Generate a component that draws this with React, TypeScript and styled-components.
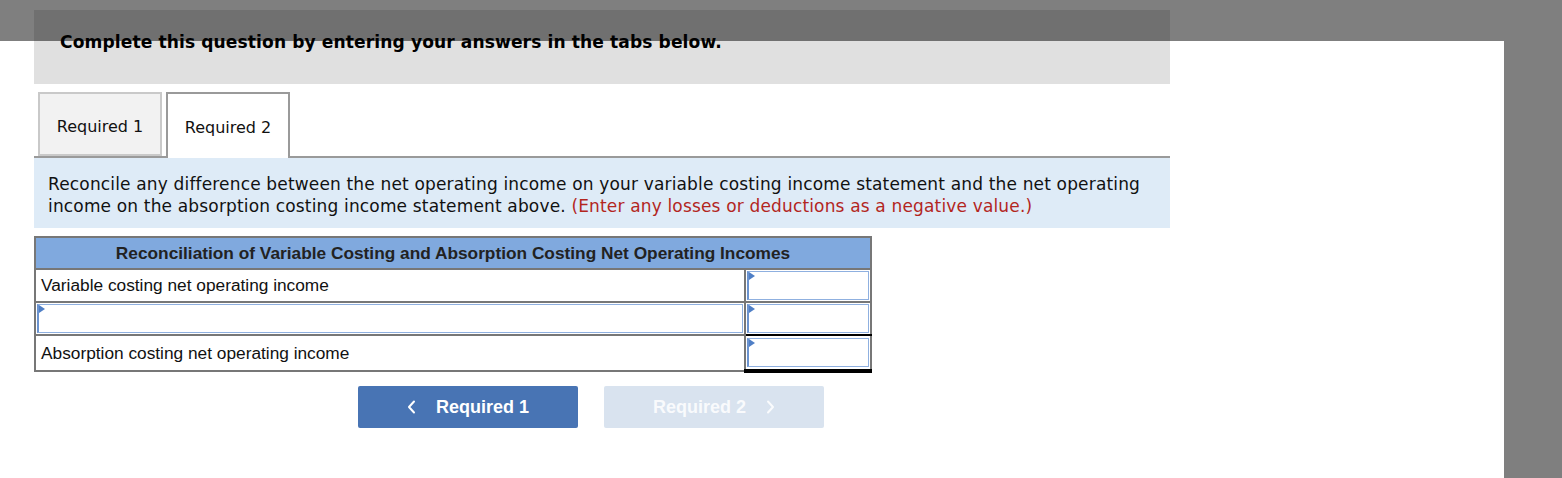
import styled, { createGlobalStyle } from "styled-components";

const GlobalStyle = createGlobalStyle`
  html, body {
    margin: 0;
    padding: 0;
    background: #fff;
  }
  body {
    width: 1562px;
    height: 478px;
    overflow: hidden;
    position: relative;
    font-family: "DejaVu Sans", Verdana, sans-serif;
    color: #111;
  }
`;

// Page shell
const Page = styled.div`
  padding: 10px 0 0 34px;
  width: 1136px;
`;

const Banner = styled.div`
  height: 74px;
  background: #e0e0e0;
  padding: 22px 0 0 26px;
  box-sizing: border-box;
  font-size: 17.1px;
  letter-spacing: 0.1px;
  font-weight: 700;
  color: #000;
`;

// Tabs
const TabStrip = styled.div`
  margin-top: 8px;
  display: flex;
  gap: 4px;
  padding-left: 4px;
  border-bottom: 2px solid #9a9a9a;
  height: 64px;
`;

const Tab = styled.div<{ $active?: boolean }>`
  width: 124px;
  height: ${({ $active }) => ($active ? "66px" : "64px")};
  box-sizing: border-box;
  display: flex;
  align-items: center;
  justify-content: center;
  font-size: 16px;
  color: #111;
  background: ${({ $active }) => ($active ? "#fff" : "#f2f2f2")};
  border: 2px solid ${({ $active }) => ($active ? "#9a9a9a" : "#c9c9c9")};
  border-bottom: ${({ $active }) => ($active ? "none" : "2px solid #c9c9c9")};
  position: relative;
  z-index: 1;
  padding-top: ${({ $active }) => ($active ? "2px" : "5px")};
`;

const Instructions = styled.div`
  background: #deebf7;
  padding: 15px 14px 11px 14px;
  font-size: 17px;
  line-height: 22px;
  letter-spacing: 0.16px;
  white-space: nowrap;
  color: #111;
`;

const Hint = styled.span`
  color: #b3261e;
`;

// Reconciliation table
const Sheet = styled.table`
  margin-top: 8px;
  width: 838px;
  border-collapse: collapse;
  font-family: "Liberation Sans", Arial, sans-serif;
  font-size: 17.3px;
  color: #111;
  border: 2px solid #777;
`;

const HeadCell = styled.th`
  height: 30px;
  background: #80a9de;
  font-weight: 700;
  text-align: center;
  color: #222;
  border: 2px solid #777;
  padding: 0;
`;

const LabelCell = styled.td<{ $tall?: boolean }>`
  height: ${({ $tall }) => ($tall ? "36px" : "31px")};
  padding: 0 0 0 5px;
  border: 2px solid #777;
  background: #fff;
  box-sizing: border-box;
`;

const InputCell = styled.td<{ $rule?: "single" | "double"; $wide?: boolean }>`
  width: ${({ $wide }) => ($wide ? "auto" : "126px")};
  padding: 1px;
  border: 2px solid #777;
  background: #fff;
  border-bottom: ${({ $rule }) =>
    $rule === "double" ? "4px solid #000" : $rule === "single" ? "2px solid #000" : "2px solid #777"};
  box-sizing: border-box;
`;

const EntryBox = styled.div`
  position: relative;
  height: 29px;
  box-sizing: border-box;
  border: 1px solid #8fb0e0;
  border-left: 2px solid #6b93cf;
  background: #fff;

  &::before {
    content: "";
    position: absolute;
    left: 0;
    top: 0;
    border-top: 4px solid transparent;
    border-bottom: 4px solid transparent;
    border-left: 6px solid #4f7fc6;
  }
`;

// Navigation buttons
const NavRow = styled.div`
  display: flex;
  gap: 26px;
  padding: 13px 0 0 324px;
`;

const NavButton = styled.button<{ $disabled?: boolean }>`
  width: 220px;
  height: 42px;
  border: none;
  border-radius: 2px;
  display: flex;
  align-items: center;
  justify-content: center;
  gap: 20px;
  font-family: "Liberation Sans", Arial, sans-serif;
  font-size: 18px;
  font-weight: 700;
  color: ${({ $disabled }) => ($disabled ? "rgba(255,255,255,0.85)" : "#fff")};
  background: ${({ $disabled }) => ($disabled ? "#d9e3ef" : "#4874b4")};
  cursor: ${({ $disabled }) => ($disabled ? "default" : "pointer")};
`;

// Modal dimmer lying over the page
const Dimmer = styled.div<{ $side: "top" | "right" }>`
  position: absolute;
  background: rgba(0, 0, 0, 0.5);
  ${({ $side }) =>
    $side === "top"
      ? "left: 0; top: 0; width: 1562px; height: 41px;"
      : "left: 1504px; top: 41px; width: 58px; height: 437px;"}
`;

const Chevron = ({ dir }: { dir: "left" | "right" }) => (
  <svg width="9" height="14" viewBox="0 0 9 14" fill="none">
    <path
      d={dir === "left" ? "M7 1.5L2 7l5 5.5" : "M2 1.5L7 7l-5 5.5"}
      stroke="currentColor"
      strokeWidth="2"
      strokeLinecap="round"
      strokeLinejoin="round"
    />
  </svg>
);

const App = () => {
  return (
    <>
      <GlobalStyle />
      <Page>
        <Banner>Complete this question by entering your answers in the tabs below.</Banner>
        <TabStrip>
          <Tab>Required 1</Tab>
          <Tab $active>Required 2</Tab>
        </TabStrip>
        <Instructions>
          Reconcile any difference between the net operating income on your variable costing income statement and the net operating
          <br />
          income on the absorption costing income statement above.{" "}
          <Hint>(Enter any losses or deductions as a negative value.)</Hint>
        </Instructions>
        <Sheet>
          <thead>
            <tr>
              <HeadCell colSpan={2}>Reconciliation of Variable Costing and Absorption Costing Net Operating Incomes</HeadCell>
            </tr>
          </thead>
          <tbody>
            <tr>
              <LabelCell>Variable costing net operating income</LabelCell>
              <InputCell>
                <EntryBox />
              </InputCell>
            </tr>
            <tr>
              <InputCell $wide>
                <EntryBox />
              </InputCell>
              <InputCell $rule="single">
                <EntryBox />
              </InputCell>
            </tr>
            <tr>
              <LabelCell $tall>Absorption costing net operating income</LabelCell>
              <InputCell $rule="double">
                <EntryBox />
              </InputCell>
            </tr>
          </tbody>
        </Sheet>
        <NavRow>
          <NavButton>
            <Chevron dir="left" />
            Required 1
          </NavButton>
          <NavButton $disabled>
            Required 2
            <Chevron dir="right" />
          </NavButton>
        </NavRow>
      </Page>
      <Dimmer $side="top" />
      <Dimmer $side="right" />
    </>
  );
};

export default App;
